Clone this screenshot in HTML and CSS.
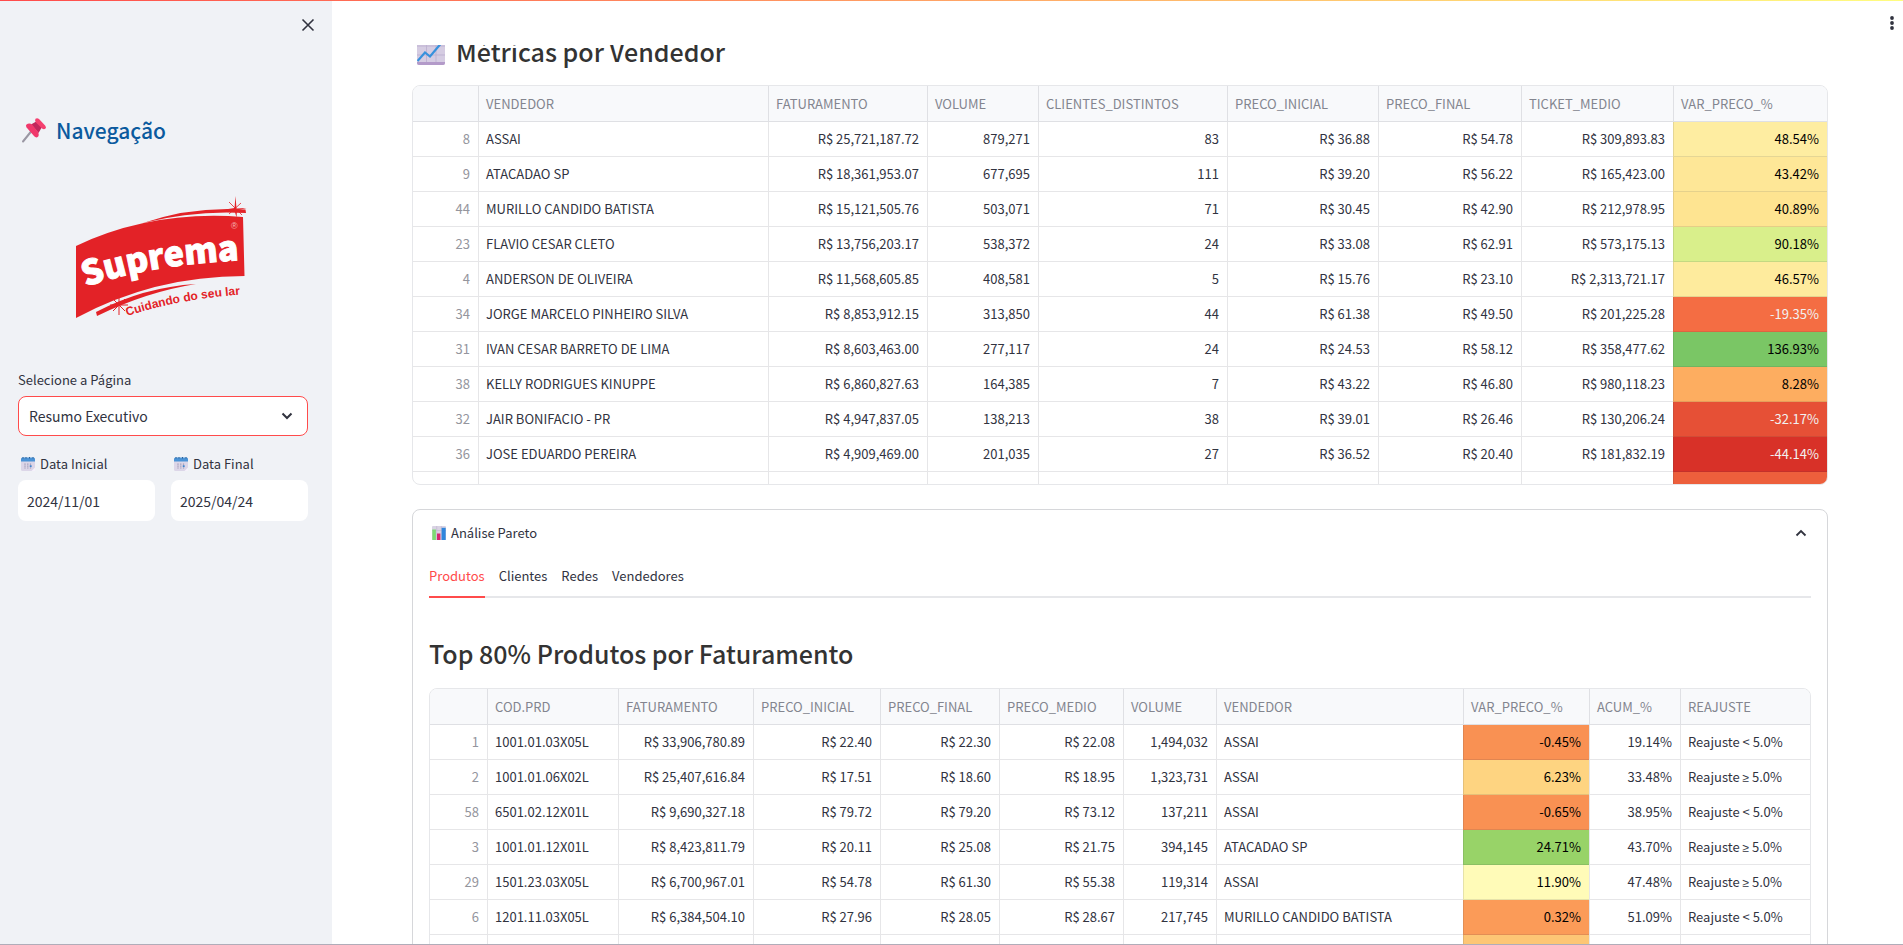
FILE: index.html
```html
<!DOCTYPE html>
<html lang="pt-BR">
<head>
<meta charset="utf-8">
<title>Resumo Executivo</title>
<link rel="stylesheet" href="styles.css">
</head>
<body>
<div class="app">
  <aside class="sidebar">
    <div class="sidebar-top">
      <button class="icon-button" type="button" aria-label="Fechar">
        <svg width="14" height="14" viewBox="0 0 14 14"><path d="M1.500 1.500l11 11M12.500 1.500l-11 11" fill="none" stroke="#31333f" stroke-width="1.600"/></svg>
      </button>
    </div>
    <h2 class="nav-title">
      <svg width="26" height="26" viewBox="0 0 26 26" aria-hidden="true">
        <path d="M10.500 14L2 24.500" stroke="#9a97a3" stroke-width="2" stroke-linecap="round"/>
        <path d="M10 7.500L16 4l5 6-3.500 6z" fill="#c0285c"/>
        <path d="M5.500 7.500Q8.500 5.500 11.500 8L17 15q1.800 4-.8 5.300-1.600.6-3-1L5.600 10.600Q4.300 8.600 5.500 7.500z" fill="#f0386b"/>
        <path d="M14.500 1.800q1.700-1.400 3.500.3l6.300 6.600q1.400 1.900 0 3-1.500 1-3.300-.3L15 5.500q-1.600-2-.5-3.700z" fill="#f4406f"/>
      </svg>
      <span>Navegação</span>
    </h2>
    <svg class="logo" width="180" height="132" viewBox="0 0 180 132" role="img" aria-label="Suprema, Cuidando do seu lar">
      <path d="M6 56Q82 20 173 27L174.500 86Q84 86 6 128z" fill="#e32227"/>
      <path d="M73 33Q122 16 175.500 19.500L176 23Q124 20 73 33z" fill="#e32227"/>
      <path d="M26 122Q74 97 126 94Q76 102 27 126z" fill="#e32227"/>
      <path d="M165.500 6l1 12.500 10-.5-9.500 2.500-.5 7-2-7-9.500-1 9.500-1.500z" fill="#e32227"/>
      <path d="M159 12l13 13M171 13l-12 11" stroke="#e32227" stroke-width=".8"/>
      <path d="M49 105v20M40 115h18M43 109l12 12M55 109l-12 12" stroke="#e32227" stroke-width="1"/>
      <path id="brand-line" d="M16 97Q80 74 178 70" fill="none"/>
      <path id="tagline-line" d="M57 126Q112 108 180 104" fill="none"/>
      <text class="logo-brand"><textPath href="#brand-line">Suprema</textPath></text>
      <text class="logo-tagline"><textPath href="#tagline-line">Cuidando do seu lar</textPath></text>
      <text class="logo-mark" x="161" y="39">®</text>
    </svg>
    <form class="filters">
      <div class="field">
        <label for="pagina">Selecione a Página</label>
        <div class="select-box">
          <select id="pagina"><option>Resumo Executivo</option></select>
          <svg width="12" height="8" viewBox="0 0 12 8" aria-hidden="true"><path d="M1.500 1.500L6 6l4.500-4.500" fill="none" stroke="#31333f" stroke-width="2"/></svg>
        </div>
      </div>
      <div class="dates">
        <div class="field">
          <label for="inicio"><svg width="14" height="14" viewBox="0 0 14 14" aria-hidden="true"><rect y="1" width="14" height="13" rx="1.500" fill="#dcd6e8"/><path d="M0 4.500V2Q0 .5 1.500.5h11Q14 .5 14 2v2.500z" fill="#4b93d6"/><path d="M1.500.8h1M4.500.8h1M8 .8h1M11.500.8h1" stroke="#2a5f96" stroke-width="1.400"/><path d="M4 6.500v5M6.800 6.500v5M9.500 6.500v5" stroke="#9d98b3" stroke-width="1.200" stroke-dasharray="1.300 .7"/><path d="M8.800 8.300h1.800v1.800H8.800z" fill="#3b83cf"/><path d="M14 10.500L10.500 14h3.500z" fill="#f6f1fb"/></svg><span>Data Inicial</span></label>
          <input id="inicio" type="text" value="2024/11/01">
        </div>
        <div class="field">
          <label for="fim"><svg width="14" height="14" viewBox="0 0 14 14" aria-hidden="true"><rect y="1" width="14" height="13" rx="1.500" fill="#dcd6e8"/><path d="M0 4.500V2Q0 .5 1.500.5h11Q14 .5 14 2v2.500z" fill="#4b93d6"/><path d="M1.500.8h1M4.500.8h1M8 .8h1M11.500.8h1" stroke="#2a5f96" stroke-width="1.400"/><path d="M4 6.500v5M6.800 6.500v5M9.500 6.500v5" stroke="#9d98b3" stroke-width="1.200" stroke-dasharray="1.300 .7"/><path d="M8.800 8.300h1.800v1.800H8.800z" fill="#3b83cf"/><path d="M14 10.500L10.500 14h3.500z" fill="#f6f1fb"/></svg><span>Data Final</span></label>
          <input id="fim" type="text" value="2025/04/24">
        </div>
      </div>
    </form>
  </aside>

  <main class="main">
    <header class="toolbar">
      <button class="icon-button" type="button" aria-label="Menu">
        <svg width="4" height="14" viewBox="0 0 4 14"><g fill="#31333f"><circle cx="2" cy="2" r="1.900"/><circle cx="2" cy="7" r="1.900"/><circle cx="2" cy="12" r="1.900"/></g></svg>
      </button>
    </header>

    <h2 class="heading">
      <svg width="28" height="28" viewBox="0 0 28 28" aria-hidden="true">
        <rect width="28" height="28" rx="2" fill="#d5cce2"/>
        <path d="M0 9h28M0 18h28M9.500 0v26M19 0v26" stroke="#bfb3d2" stroke-width="1"/>
        <path d="M0 25h28v1q0 2-2 2H2q-2 0-2-2z" fill="#b39ac9"/>
        <path d="M.5 24L8 15.500l5 4L26 4" fill="none" stroke="#3791dd" stroke-width="2.200"/>
      </svg>
      <span>Métricas por Vendedor</span>
    </h2>

    <div class="grid grid-short">
      <table>
        <colgroup><col class="w65"><col class="w290"><col class="w159"><col class="w111"><col class="w189"><col class="w151"><col class="w143"><col class="w152"><col class="w154"></colgroup>
        <thead><tr><th></th><th>VENDEDOR</th><th>FATURAMENTO</th><th>VOLUME</th><th>CLIENTES_DISTINTOS</th><th>PRECO_INICIAL</th><th>PRECO_FINAL</th><th>TICKET_MEDIO</th><th>VAR_PRECO_%</th></tr></thead>
        <tbody>
          <tr><td class="idx">8</td><td>ASSAI</td><td class="num">R$ 25,721,187.72</td><td class="num">879,271</td><td class="num">83</td><td class="num">R$ 36.88</td><td class="num">R$ 54.78</td><td class="num">R$ 309,893.83</td><td class="heat" style="background-color:#feeda1">48.54%</td></tr>
          <tr><td class="idx">9</td><td>ATACADAO SP</td><td class="num">R$ 18,361,953.07</td><td class="num">677,695</td><td class="num">111</td><td class="num">R$ 39.20</td><td class="num">R$ 56.22</td><td class="num">R$ 165,423.00</td><td class="heat" style="background-color:#fee797">43.42%</td></tr>
          <tr><td class="idx">44</td><td>MURILLO CANDIDO BATISTA</td><td class="num">R$ 15,121,505.76</td><td class="num">503,071</td><td class="num">71</td><td class="num">R$ 30.45</td><td class="num">R$ 42.90</td><td class="num">R$ 212,978.95</td><td class="heat" style="background-color:#fee491">40.89%</td></tr>
          <tr><td class="idx">23</td><td>FLAVIO CESAR CLETO</td><td class="num">R$ 13,756,203.17</td><td class="num">538,372</td><td class="num">24</td><td class="num">R$ 33.08</td><td class="num">R$ 62.91</td><td class="num">R$ 573,175.13</td><td class="heat" style="background-color:#d9ef8b">90.18%</td></tr>
          <tr><td class="idx">4</td><td>ANDERSON DE OLIVEIRA</td><td class="num">R$ 11,568,605.85</td><td class="num">408,581</td><td class="num">5</td><td class="num">R$ 15.76</td><td class="num">R$ 23.10</td><td class="num">R$ 2,313,721.17</td><td class="heat" style="background-color:#feeb9d">46.57%</td></tr>
          <tr><td class="idx">34</td><td>JORGE MARCELO PINHEIRO SILVA</td><td class="num">R$ 8,853,912.15</td><td class="num">313,850</td><td class="num">44</td><td class="num">R$ 61.38</td><td class="num">R$ 49.50</td><td class="num">R$ 201,225.28</td><td class="heat light" style="background-color:#f46d43">-19.35%</td></tr>
          <tr><td class="idx">31</td><td>IVAN CESAR BARRETO DE LIMA</td><td class="num">R$ 8,603,463.00</td><td class="num">277,117</td><td class="num">24</td><td class="num">R$ 24.53</td><td class="num">R$ 58.12</td><td class="num">R$ 358,477.62</td><td class="heat" style="background-color:#7ac665">136.93%</td></tr>
          <tr><td class="idx">38</td><td>KELLY RODRIGUES KINUPPE</td><td class="num">R$ 6,860,827.63</td><td class="num">164,385</td><td class="num">7</td><td class="num">R$ 43.22</td><td class="num">R$ 46.80</td><td class="num">R$ 980,118.23</td><td class="heat" style="background-color:#fdad60">8.28%</td></tr>
          <tr><td class="idx">32</td><td>JAIR BONIFACIO - PR</td><td class="num">R$ 4,947,837.05</td><td class="num">138,213</td><td class="num">38</td><td class="num">R$ 39.01</td><td class="num">R$ 26.46</td><td class="num">R$ 130,206.24</td><td class="heat light" style="background-color:#e65036">-32.17%</td></tr>
          <tr><td class="idx">36</td><td>JOSE EDUARDO PEREIRA</td><td class="num">R$ 4,909,469.00</td><td class="num">201,035</td><td class="num">27</td><td class="num">R$ 36.52</td><td class="num">R$ 20.40</td><td class="num">R$ 181,832.19</td><td class="heat light" style="background-color:#d83128">-44.14%</td></tr>
          <tr><td class="idx"></td><td></td><td></td><td></td><td></td><td></td><td></td><td></td><td class="heat" style="background-color:#ed5f3c"></td></tr>
        </tbody>
      </table>
    </div>

    <details class="expander" open>
      <summary>
        <svg width="14" height="14" viewBox="0 0 14 14" aria-hidden="true">
          <rect width="14" height="14" rx="1" fill="#d9d3e3"/>
          <path d="M0 4.500h14M4.700 0v14M9.300 0v14" stroke="#c3b9d3" stroke-width=".7"/>
          <path d="M.3 3.500h3.600V14H.3z" fill="#7ddc74"/><path d="M5 7.500h3.400V14H5z" fill="#d8286f"/><path d="M9.600 1.800h4.100V14H9.600z" fill="#2f86dc"/>
        </svg>
        <span class="expander-title">Análise Pareto</span>
        <svg width="12" height="8" viewBox="0 0 12 8" aria-hidden="true"><path d="M1.500 6.500L6 2l4.500 4.500" fill="none" stroke="#31333f" stroke-width="1.800"/></svg>
      </summary>
      <div class="expander-body">
        <div class="tabs" role="tablist">
          <button class="tab active" role="tab" aria-selected="true" type="button">Produtos</button>
          <button class="tab" role="tab" type="button">Clientes</button>
          <button class="tab" role="tab" type="button">Redes</button>
          <button class="tab" role="tab" type="button">Vendedores</button>
        </div>
        <h2 class="heading section-heading">Top 80% Produtos por Faturamento</h2>
        <div class="grid">
          <table>
            <colgroup><col class="w57"><col class="w131"><col class="w135"><col class="w127"><col class="w119"><col class="w124"><col class="w93"><col class="w247"><col class="w126"><col class="w91"><col class="w130"></colgroup>
            <thead><tr><th></th><th>COD.PRD</th><th>FATURAMENTO</th><th>PRECO_INICIAL</th><th>PRECO_FINAL</th><th>PRECO_MEDIO</th><th>VOLUME</th><th>VENDEDOR</th><th>VAR_PRECO_%</th><th>ACUM_%</th><th>REAJUSTE</th></tr></thead>
            <tbody>
              <tr><td class="idx">1</td><td>1001.01.03X05L</td><td class="num">R$ 33,906,780.89</td><td class="num">R$ 22.40</td><td class="num">R$ 22.30</td><td class="num">R$ 22.08</td><td class="num">1,494,032</td><td>ASSAI</td><td class="heat" style="background-color:#f99153">-0.45%</td><td class="num">19.14%</td><td>Reajuste &lt; 5.0%</td></tr>
              <tr><td class="idx">2</td><td>1001.01.06X02L</td><td class="num">R$ 25,407,616.84</td><td class="num">R$ 17.51</td><td class="num">R$ 18.60</td><td class="num">R$ 18.95</td><td class="num">1,323,731</td><td>ASSAI</td><td class="heat" style="background-color:#fed481">6.23%</td><td class="num">33.48%</td><td>Reajuste <span class="sign">≥</span> 5.0%</td></tr>
              <tr><td class="idx">58</td><td>6501.02.12X01L</td><td class="num">R$ 9,690,327.18</td><td class="num">R$ 79.72</td><td class="num">R$ 79.20</td><td class="num">R$ 73.12</td><td class="num">137,211</td><td>ASSAI</td><td class="heat" style="background-color:#f99153">-0.65%</td><td class="num">38.95%</td><td>Reajuste &lt; 5.0%</td></tr>
              <tr><td class="idx">3</td><td>1001.01.12X01L</td><td class="num">R$ 8,423,811.79</td><td class="num">R$ 20.11</td><td class="num">R$ 25.08</td><td class="num">R$ 21.75</td><td class="num">394,145</td><td>ATACADAO SP</td><td class="heat" style="background-color:#98d368">24.71%</td><td class="num">43.70%</td><td>Reajuste <span class="sign">≥</span> 5.0%</td></tr>
              <tr><td class="idx">29</td><td>1501.23.03X05L</td><td class="num">R$ 6,700,967.01</td><td class="num">R$ 54.78</td><td class="num">R$ 61.30</td><td class="num">R$ 55.38</td><td class="num">119,314</td><td>ASSAI</td><td class="heat" style="background-color:#fffbb8">11.90%</td><td class="num">47.48%</td><td>Reajuste <span class="sign">≥</span> 5.0%</td></tr>
              <tr><td class="idx">6</td><td>1201.11.03X05L</td><td class="num">R$ 6,384,504.10</td><td class="num">R$ 27.96</td><td class="num">R$ 28.05</td><td class="num">R$ 28.67</td><td class="num">217,745</td><td>MURILLO CANDIDO BATISTA</td><td class="heat" style="background-color:#fb9b58">0.32%</td><td class="num">51.09%</td><td>Reajuste &lt; 5.0%</td></tr>
              <tr><td class="idx"></td><td></td><td></td><td></td><td></td><td></td><td></td><td></td><td class="heat" style="background-color:#fdc675"></td><td></td><td></td></tr>
            </tbody>
          </table>
        </div>
      </div>
    </details>
  </main>
</div>
</body>
</html>
```
FILE: styles.css
```css
*{box-sizing:border-box}
body{margin:0;font-family:"Noto Sans CJK SC","Noto Sans",sans-serif;font-size:13px;line-height:20px;color:#31333f;background:#fff}
button,input,select{font:inherit;color:inherit}
svg{display:block;flex:none}

.app{position:relative;display:flex;height:100vh;overflow:hidden;border-bottom:1px solid #b0adb9}
.app::before{content:"";position:absolute;z-index:3;top:0;left:0;right:0;height:1px;background:linear-gradient(90deg,#ff4b4b,#fffd80)}

.icon-button{display:grid;place-items:center;width:24px;height:24px;padding:0;border:0;background:none;cursor:pointer}

.sidebar{flex:none;width:332px;padding:0 24px 0 18px;background:#f0f2f6}
.sidebar-top{display:flex;justify-content:flex-end;height:112px;padding-top:13px;margin-right:-12px}
.nav-title{display:flex;align-items:center;gap:9px;margin:0 0 42px;padding-left:3px;font-size:21px;line-height:36px;font-weight:500;color:#0b5a9e}
.logo{margin:0 auto 48px 52px}
.logo-brand{font:900 34px "Noto Sans CJK SC","Noto Sans",sans-serif;fill:#fff;stroke:#fff;stroke-width:1px}
.logo-tagline{font:bold 12px "Liberation Sans",sans-serif;fill:#e32227}
.logo-mark{font:9px "Liberation Sans",sans-serif;fill:#f6b5b6}

.filters{display:grid;gap:18px}
.field{display:grid;gap:6px;min-width:0}
.field label{display:flex;align-items:center;gap:5px}
.dates .field label{padding-left:3px}
.select-box{display:grid;align-items:center}
.select-box>*{grid-area:1/1}
.select-box svg{justify-self:end;margin-right:15px;pointer-events:none}
.select-box select{appearance:none;width:100%;height:40px;padding:0 32px 0 10px;border:1px solid #ff4b4b;border-radius:8px;background:#fff;font-size:14px}
.dates{display:grid;grid-template-columns:1fr 1fr;gap:16px}
.dates input{width:100%;height:41px;padding:0 9px;border:0;border-radius:8px;background:#fff;font-size:14px}

.main{flex:1;min-width:0;padding:34px 75px 0 80px}
.toolbar{position:absolute;z-index:2;top:0;left:332px;right:0;height:45px;display:flex;justify-content:flex-end;padding-top:11px;background:#fff}
.toolbar .icon-button{width:22px}

.heading{display:flex;align-items:center;gap:11px;margin:0 0 17px;font-size:25px;line-height:34px;font-weight:500;color:#333}
.main>.heading{padding-left:5px}
.section-heading{margin:38px 0 18px}

.grid{border:1px solid #e6e7ea;border-radius:8px;overflow:hidden}
.grid-short{max-height:400px}
table{width:100%;table-layout:fixed;border-collapse:separate;border-spacing:0}
th,td{height:35px;padding:0 8px 0 7px;text-align:left;white-space:nowrap;overflow:hidden;font-weight:400;border:0 solid rgba(49,51,63,.12);border-width:0 0 1px 1px}
th:first-child,td:first-child{border-left-width:0}
th{height:36px;color:#83858f;background:#f8f9fb}
.num,.heat,.idx{text-align:right}
.idx{color:#94959d}
.heat{color:#000}
.light{color:#f1f1f1}
.sign{font-family:"Noto Sans",sans-serif;font-size:12px;line-height:1}

.w57{width:57px}.w65{width:65px}.w91{width:91px}.w93{width:93px}.w111{width:111px}.w119{width:119px}
.w124{width:124px}.w126{width:126px}.w127{width:127px}.w130{width:130px}.w131{width:131px}.w135{width:135px}
.w143{width:143px}.w151{width:151px}.w152{width:152px}.w154{width:154px}.w159{width:159px}.w189{width:189px}
.w247{width:247px}.w290{width:290px}

.expander{margin-top:24px;border:1px solid #d6d7da;border-radius:8px}
.expander summary{display:flex;align-items:center;gap:5px;height:46px;padding:0 20px 0 19px;list-style:none;cursor:pointer}
.expander-title{flex:1}
.expander-body{padding:0 16px 16px}
.tabs{display:flex;gap:14px;height:42px;border-bottom:2px solid #e6e7ea}
.tab{height:42px;padding:0;border:0;border-bottom:2px solid transparent;background:none;cursor:pointer}
.tab.active{color:#ff4b4b;border-bottom-color:#ff4b4b}
```
